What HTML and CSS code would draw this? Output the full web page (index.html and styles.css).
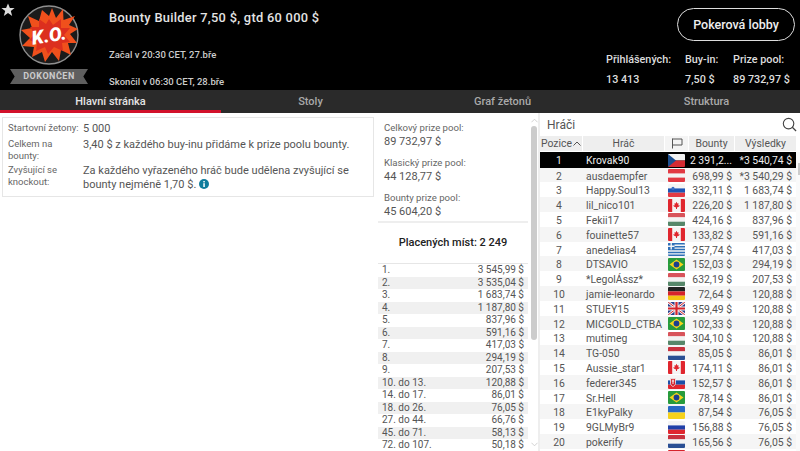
FILE: index.html
```html
<!DOCTYPE html>
<html lang="cs">
<head>
  <meta charset="UTF-8">
  <title>Bounty Builder</title>
  <link rel="stylesheet" href="styles.css">
</head>
<body>
  <svg class="defs" width="0" height="0">
    <symbol id="cz" viewBox="0 0 17 13"><rect width="17" height="6.5" fill="#f2f2f2"/><rect y="6.5" width="17" height="6.5" fill="#d52b32"/><path d="M0 0L8 6.5L0 13Z" fill="#1d4f8f"/></symbol>
    <symbol id="at" viewBox="0 0 17 13"><rect width="17" height="13" fill="#e23a44"/><rect y="4.4" width="17" height="4.2" fill="#f4f4f4"/></symbol>
    <symbol id="si" viewBox="0 0 17 13"><rect width="17" height="4.4" fill="#f4f4f4"/><rect y="4.4" width="17" height="4.3" fill="#1c55b5"/><rect y="8.7" width="17" height="4.3" fill="#e23a44"/><circle cx="5" cy="4.4" r="1.6" fill="#3a6fc4"/></symbol>
    <symbol id="ca" viewBox="0 0 17 13"><rect width="17" height="13" fill="#f4f4f4"/><rect width="4.2" height="13" fill="#e0262e"/><rect x="12.8" width="4.2" height="13" fill="#e0262e"/><path d="M8.5 2.8L9.4 4.6L10.6 4.2L10.2 6.6L11.6 6L11.2 7.6L9 8.4V10H8V8.4L5.8 7.6L5.4 6L6.8 6.6L6.4 4.2L7.6 4.6Z" fill="#e0262e"/></symbol>
    <symbol id="hu" viewBox="0 0 17 13"><rect width="17" height="4.4" fill="#d8535a"/><rect y="4.4" width="17" height="4.3" fill="#f2f2f2"/><rect y="8.7" width="17" height="4.3" fill="#57876a"/></symbol>
    <symbol id="gr" viewBox="0 0 17 13"><rect width="17" height="13" fill="#2f70b8"/><path d="M0 2.2H17M0 5.1H17M0 8H17M0 10.9H17" stroke="#f4f4f4" stroke-width="1.4"/><rect width="6.5" height="6.5" fill="#2f70b8"/><path d="M3.2 0V6.5M0 3.2H6.5" stroke="#f4f4f4" stroke-width="1.4"/></symbol>
    <symbol id="br" viewBox="0 0 17 13"><rect width="17" height="13" fill="#279b3c"/><path d="M8.5 1.4L15.5 6.5L8.5 11.6L1.5 6.5Z" fill="#f5d31a"/><circle cx="8.5" cy="6.5" r="2.9" fill="#1c3f8f"/></symbol>
    <symbol id="de" viewBox="0 0 17 13"><rect width="17" height="4.4" fill="#222"/><rect y="4.4" width="17" height="4.3" fill="#d6232b"/><rect y="8.7" width="17" height="4.3" fill="#f2c413"/></symbol>
    <symbol id="gb" viewBox="0 0 17 13"><rect width="17" height="13" fill="#2a3f8c"/><path d="M0 0L17 13M17 0L0 13" stroke="#f4f4f4" stroke-width="2.6"/><path d="M0 0L17 13M17 0L0 13" stroke="#d6232b" stroke-width="1"/><path d="M8.5 0V13M0 6.5H17" stroke="#f4f4f4" stroke-width="4"/><path d="M8.5 0V13M0 6.5H17" stroke="#d6232b" stroke-width="2.2"/></symbol>
    <symbol id="nl" viewBox="0 0 17 13"><rect width="17" height="4.4" fill="#c8323e"/><rect y="4.4" width="17" height="4.3" fill="#f4f4f4"/><rect y="8.7" width="17" height="4.3" fill="#2a4f94"/></symbol>
    <symbol id="sk" viewBox="0 0 17 13"><rect width="17" height="4.4" fill="#f4f4f4"/><rect y="4.4" width="17" height="4.3" fill="#1c4fa8"/><rect y="8.7" width="17" height="4.3" fill="#e0262e"/><path d="M2.5 2.6H7.5V7.5C7.5 9.4 5 10.6 5 10.6C5 10.6 2.5 9.4 2.5 7.5Z" fill="#d6232b" stroke="#f4f4f4" stroke-width=".8"/><path d="M5 3.6V8M3.8 5H6.2" stroke="#f4f4f4"/></symbol>
    <symbol id="ua" viewBox="0 0 17 13"><rect width="17" height="6.5" fill="#2a69c4"/><rect y="6.5" width="17" height="6.5" fill="#f6d21c"/></symbol>
    <symbol id="ru" viewBox="0 0 17 13"><rect width="17" height="4.4" fill="#f4f4f4"/><rect y="4.4" width="17" height="4.3" fill="#2040a8"/><rect y="8.7" width="17" height="4.3" fill="#e0262e"/></symbol>
    <symbol id="dk" viewBox="0 0 17 13"><rect width="17" height="13" fill="#d6232b"/></symbol>
  </svg>

  <!-- hlavička -->
  <header class="header">
    <svg class="fav-star" viewBox="0 0 14 14"><path d="M7 .5L8.9 5H13.6L9.8 8L11.2 13L7 10.1L2.8 13L4.2 8L.4 5H5.1Z" fill="#dcdcdc"/></svg>
    <div class="logo">
      <svg class="ko-badge" viewBox="0 0 60 60">
        <circle cx="30" cy="30" r="29" fill="#1b1b1b" stroke="#8f8f8f" stroke-width="1.4"/>
        <path d="M30 11L33 3L37 13L44 4L44.5 15L56 11L50 20L59 24L51 29L58 38L49 38L52 50L42 45L40 56L33 47L26 57L23 47L13 52L15 42L3 41L11 33L2 25L13 23L9 11L20 16L23 5Z" fill="#f0501c"/>
        <path d="M30 14L34 20L42 14L42 23L51 23L45 30L51 37L43 38L44 46L35 42L29 49L26 42L17 46L18 38L10 35L16 29L11 22L20 22L20 14L27 19Z" fill="#dc2f1e"/>
        <text class="ko-text" x="30" y="37" transform="rotate(-9 30 31)">K.O.</text>
      </svg>
      <div class="ribbon">DOKONČEN</div>
    </div>
    <div class="title-col">
      <h1 class="title">Bounty Builder 7,50 $, gtd 60 000 $</h1>
      <p class="time">Začal v 20:30 CET, 27.bře</p>
      <p class="time">Skončil v 06:30 CET, 28.bře</p>
    </div>
    <div class="right-col">
      <a href="#" class="lobby-btn">Pokerová lobby</a>
      <div class="stats">
        <div class="stat stat-players"><span>Přihlášených:</span><span>13 413</span></div>
        <div class="stat stat-buyin"><span>Buy-in:</span><span>7,50 $</span></div>
        <div class="stat"><span>Prize pool:</span><span>89 732,97 $</span></div>
      </div>
    </div>
  </header>

  <!-- záložky -->
  <nav class="tabs">
    <a href="#" class="tab active">Hlavní stránka</a>
    <a href="#" class="tab">Stoly</a>
    <a href="#" class="tab">Graf žetonů</a>
    <a href="#" class="tab tab-last">Struktura</a>
  </nav>

  <main class="content">
    <section class="info-col">
      <div class="info-box">
        <div class="info-label">Startovní žetony:</div>
        <div class="info-value">5 000</div>
        <div class="info-label">Celkem na bounty:</div>
        <div class="info-value">3,40 $ z každého buy-inu přidáme k prize poolu bounty.</div>
        <div class="info-label">Zvyšující se knockout:</div>
        <div class="info-value">Za každého vyřazeného hráč bude udělena zvyšující se bounty nejméně 1,70 $. <svg class="info-dot" viewBox="0 0 10 10"><circle cx="5" cy="5" r="5" fill="#0f7c9c"/><rect x="4.3" y="4.2" width="1.5" height="3.8" fill="#fff"/><rect x="4.3" y="2" width="1.5" height="1.4" fill="#fff"/></svg></div>
      </div>
    </section>

    <section class="prize-col">
      <div class="pools">
        <div class="pool"><div class="pool-label">Celkový prize pool:</div><div class="pool-value">89 732,97 $</div></div>
        <div class="pool"><div class="pool-label">Klasický prize pool:</div><div class="pool-value">44 128,77 $</div></div>
        <div class="pool"><div class="pool-label">Bounty prize pool:</div><div class="pool-value">45 604,20 $</div></div>
      </div>
      <div class="paid">Placených míst: 2 249</div>
      <div class="payouts">
        <div class="payout"><span>1.</span><span>3 545,99 $</span></div>
        <div class="payout"><span>2.</span><span>3 535,04 $</span></div>
        <div class="payout"><span>3.</span><span>1 683,74 $</span></div>
        <div class="payout"><span>4.</span><span>1 187,80 $</span></div>
        <div class="payout"><span>5.</span><span>837,96 $</span></div>
        <div class="payout"><span>6.</span><span>591,16 $</span></div>
        <div class="payout"><span>7.</span><span>417,03 $</span></div>
        <div class="payout"><span>8.</span><span>294,19 $</span></div>
        <div class="payout"><span>9.</span><span>207,53 $</span></div>
        <div class="payout"><span>10. do 13.</span><span>120,88 $</span></div>
        <div class="payout"><span>14. do 17.</span><span>86,01 $</span></div>
        <div class="payout"><span>18. do 26.</span><span>76,05 $</span></div>
        <div class="payout"><span>27. do 44.</span><span>66,76 $</span></div>
        <div class="payout"><span>45. do 71.</span><span>58,13 $</span></div>
        <div class="payout"><span>72. do 107.</span><span>50,18 $</span></div>
      </div>
    </section>

    <div class="scrollbar"><svg class="arrow" viewBox="0 0 8 5"><path d="M.5 4.5L4 1L7.5 4.5" fill="none" stroke="#ccc"/></svg><div class="thumb"></div><svg class="arrow arrow-down" viewBox="0 0 8 5"><path d="M.5 .5L4 4L7.5 .5" fill="none" stroke="#ccc"/></svg></div>

    <section class="players-col">
      <div class="players-head">
        <span>Hráči</span>
        <svg class="search" viewBox="0 0 16 16"><circle cx="7" cy="7" r="5.6" fill="none" stroke="#444" stroke-width="1.2"/><path d="M11 11L15 15" stroke="#444" stroke-width="1.4"/></svg>
      </div>
      <div class="row head">
        <div class="th">Pozice<svg class="sort" viewBox="0 0 8 5"><path d="M.5 4.5L4 1L7.5 4.5" fill="none" stroke="#555"/></svg></div>
        <div class="th">Hráč</div>
        <div class="th"><svg class="flag-icon" viewBox="0 0 12 11"><path d="M1.5 .5V10.5M1.5 1H11V7H1.5" fill="none" stroke="#555"/></svg></div>
        <div class="th">Bounty</div>
        <div class="th">Výsledky</div>
      </div>
      <div class="row me"><div class="pos">1</div><div>Krovak90</div><svg class="flag"><use href="#cz"/></svg><div class="num">2 391,2...</div><div class="num">*3 540,74 $</div></div>
      <div class="row"><div class="pos">2</div><div>ausdaempfer</div><svg class="flag"><use href="#at"/></svg><div class="num">698,99 $</div><div class="num">*3 540,29 $</div></div>
      <div class="row"><div class="pos">3</div><div>Happy.Soul13</div><svg class="flag"><use href="#si"/></svg><div class="num">332,11 $</div><div class="num">1 683,74 $</div></div>
      <div class="row"><div class="pos">4</div><div>lil_nico101</div><svg class="flag"><use href="#ca"/></svg><div class="num">226,20 $</div><div class="num">1 187,80 $</div></div>
      <div class="row"><div class="pos">5</div><div>Fekii17</div><svg class="flag"><use href="#hu"/></svg><div class="num">424,16 $</div><div class="num">837,96 $</div></div>
      <div class="row"><div class="pos">6</div><div>fouinette57</div><svg class="flag"><use href="#ca"/></svg><div class="num">133,82 $</div><div class="num">591,16 $</div></div>
      <div class="row"><div class="pos">7</div><div>anedelias4</div><svg class="flag"><use href="#gr"/></svg><div class="num">257,74 $</div><div class="num">417,03 $</div></div>
      <div class="row"><div class="pos">8</div><div>DTSAVIO</div><svg class="flag"><use href="#br"/></svg><div class="num">152,03 $</div><div class="num">294,19 $</div></div>
      <div class="row"><div class="pos">9</div><div>*LegolÁssz*</div><svg class="flag"><use href="#hu"/></svg><div class="num">632,19 $</div><div class="num">207,53 $</div></div>
      <div class="row"><div class="pos">10</div><div>jamie-leonardo</div><svg class="flag"><use href="#de"/></svg><div class="num">72,64 $</div><div class="num">120,88 $</div></div>
      <div class="row"><div class="pos">11</div><div>STUEY15</div><svg class="flag"><use href="#gb"/></svg><div class="num">359,49 $</div><div class="num">120,88 $</div></div>
      <div class="row"><div class="pos">12</div><div>MICGOLD_CTBA</div><svg class="flag"><use href="#br"/></svg><div class="num">102,33 $</div><div class="num">120,88 $</div></div>
      <div class="row"><div class="pos">13</div><div>mutimeg</div><svg class="flag"><use href="#hu"/></svg><div class="num">304,10 $</div><div class="num">120,88 $</div></div>
      <div class="row"><div class="pos">14</div><div>TG-050</div><svg class="flag"><use href="#nl"/></svg><div class="num">85,05 $</div><div class="num">86,01 $</div></div>
      <div class="row"><div class="pos">15</div><div>Aussie_star1</div><svg class="flag"><use href="#ca"/></svg><div class="num">174,11 $</div><div class="num">86,01 $</div></div>
      <div class="row"><div class="pos">16</div><div>federer345</div><svg class="flag"><use href="#sk"/></svg><div class="num">152,57 $</div><div class="num">86,01 $</div></div>
      <div class="row"><div class="pos">17</div><div>Sr.Hell</div><svg class="flag"><use href="#br"/></svg><div class="num">78,14 $</div><div class="num">86,01 $</div></div>
      <div class="row"><div class="pos">18</div><div>E1kyPalky</div><svg class="flag"><use href="#ua"/></svg><div class="num">87,54 $</div><div class="num">76,05 $</div></div>
      <div class="row"><div class="pos">19</div><div>9GLMyBr9</div><svg class="flag"><use href="#ru"/></svg><div class="num">156,88 $</div><div class="num">76,05 $</div></div>
      <div class="row"><div class="pos">20</div><div>pokerify</div><svg class="flag"><use href="#nl"/></svg><div class="num">165,56 $</div><div class="num">76,05 $</div></div>
      <div class="row"><div class="pos"></div><div></div><svg class="flag"><use href="#dk"/></svg><div></div><div></div></div>
      <div class="players-scroll"><div class="players-thumb"></div></div>
    </section>
  </main>
</body>
</html>
```

FILE: styles.css
```css
body {
  margin: 0;
  height: 451px;
  overflow: hidden;
  background-color: #fff;
  font-family: Roboto, "Liberation Sans", sans-serif;
  color: #555;
}

.defs {
  position: absolute;
}

/* hlavička */
.header {
  position: relative;
  display: flex;
  height: 90px;
  background-color: #000;
  color: #ddd;
}

.fav-star {
  position: absolute;
  top: 3px;
  left: 1px;
  width: 14px;
  height: 14px;
}

.logo {
  display: flex;
  flex-direction: column;
  align-items: center;
  width: 98px;
  margin-right: 11px;
  padding-top: 5px;
}

.ko-badge {
  width: 60px;
  height: 60px;
}

.ko-text {
  font-family: Roboto, sans-serif;
  font-weight: 900;
  font-style: italic;
  font-size: 19px;
  fill: #fff;
  text-anchor: middle;
}

.ribbon {
  width: 78px;
  height: 15px;
  margin-top: 4px;
  background-color: #5f5f5f;
  clip-path: polygon(0 0, 100% 0, 94% 50%, 100% 100%, 0 100%, 6% 50%);
  color: #ccc;
  font-size: 9px;
  font-weight: 700;
  line-height: 15px;
  letter-spacing: .5px;
  text-align: center;
}

.title-col {
  flex-grow: 1;
}

.title {
  margin: 10px 0 0;
  font-size: 12.8px;
  font-weight: 500;
  line-height: 16px;
  letter-spacing: .3px;
  color: #e4e4e4;
}

.time {
  margin: 0;
  font-size: 9.5px;
  font-weight: 500;
  line-height: 13px;
  color: #ccc;
}

.title + .time {
  margin-top: 22px;
}

.time + .time {
  margin-top: 14px;
}

.right-col {
  display: flex;
  flex-direction: column;
  align-items: flex-end;
  width: 194px;
  padding-right: 5px;
  padding-top: 8px;
}

.lobby-btn {
  width: 116px;
  height: 31px;
  border: 1px solid #ddd;
  border-radius: 17px;
  color: #eee;
  font-size: 12.5px;
  font-weight: 500;
  line-height: 31px;
  text-align: center;
  text-decoration: none;
}

.stats {
  display: flex;
  align-self: stretch;
  margin-top: 12px;
  padding-left: 5px;
  font-size: 10.8px;
  font-weight: 500;
}

.stat {
  display: flex;
  flex-direction: column;
  gap: 7px;
  white-space: nowrap;
}

.stat span {
  line-height: 13px;
}

.stat-players {
  width: 79px;
}

.stat-buyin {
  width: 48px;
}

/* záložky */
.tabs {
  display: grid;
  grid-template-columns: 221px 179px 205px 1fr;
  height: 23px;
  background-color: #2a2a2a;
}

.tab {
  color: #a9a9a9;
  font-size: 11px;
  font-weight: 500;
  line-height: 24px;
  text-align: center;
  text-decoration: none;
}

.tab-last {
  padding-left: 8px;
}

.tab.active {
  border-bottom: 3px solid #d2112b;
  height: 20px;
  color: #e4e4e4;
}

/* obsah */
.content {
  display: flex;
  height: 338px;
}

.info-col {
  width: 378px;
  padding: 4px 2px;
  box-sizing: border-box;
}

.info-box {
  display: grid;
  grid-template-columns: 75px 1fr;
  row-gap: 2px;
  width: 372px;
  height: 80px;
  padding: 4px 5px;
  box-sizing: border-box;
  border: 1px solid #e6e6e6;
}

.info-label {
  font-size: 9.5px;
  line-height: 12px;
  color: #666;
}

.info-value {
  font-size: 11px;
  line-height: 14px;
  color: #555;
}

.info-dot {
  width: 10px;
  height: 10px;
  vertical-align: -1px;
}

.prize-col {
  display: flex;
  flex-direction: column;
  width: 150px;
}

.pools {
  height: 110px;
  padding: 8px 6px 0;
  box-sizing: border-box;
  border-bottom: 2px solid #eee;
}

.pool {
  height: 35px;
}

.pool-label {
  font-size: 9.6px;
  line-height: 13px;
  color: #666;
}

.pool-value {
  font-size: 11px;
  line-height: 15px;
}

.paid {
  height: 40px;
  border-bottom: 1px solid #e6e6e6;
  color: #222;
  font-size: 11px;
  font-weight: 500;
  line-height: 40px;
  text-align: center;
}

.payout {
  display: flex;
  justify-content: space-between;
  height: 12.5px;
  padding: 0 4px;
  font-size: 10px;
  line-height: 12.5px;
}

.payout:nth-child(even) {
  background-color: #f0f0f0;
}

.scrollbar {
  position: relative;
  width: 7px;
  margin-left: 3px;
}

.arrow {
  position: absolute;
  top: 5px;
  left: 0;
  width: 7px;
  height: 5px;
}

.arrow-down {
  top: auto;
  bottom: 4px;
}

.thumb {
  position: absolute;
  top: 13px;
  left: 0;
  width: 6px;
  height: 214px;
  border-radius: 3px;
  background-color: #ccc;
}

.players-col {
  position: relative;
  flex-grow: 1;
  overflow: hidden;
  box-sizing: border-box;
  border-left: 2px solid #eee;
}

.players-head {
  display: flex;
  justify-content: space-between;
  align-items: center;
  height: 23px;
  padding: 0 3px 0 7px;
  font-size: 12px;
}

.search {
  width: 15px;
  height: 15px;
}

.row {
  display: grid;
  grid-template-columns: 46px 82px 17px 1fr 60px;
  align-items: center;
  width: 256px;
  height: 14.8px;
  padding-right: 4px;
  box-sizing: border-box;
  font-size: 10.4px;
  line-height: 14px;
}

/* el texto queda 1px mas abajo que la bandera */
.row > div {
  padding-top: 2px;
}

.row:nth-child(even) {
  background-color: #f5f5f5;
}

.row.me {
  height: 15.6px;
  background-color: #000;
  color: #eee;
}

.row.head {
  display: flex;
  gap: 1px;
  height: 15px;
  margin-bottom: 1px;
  padding-right: 0;
  background-color: #fff;
  color: #555;
}

.row > .th {
  display: flex;
  justify-content: center;
  align-items: center;
  gap: 1px;
  height: 15px;
  padding-top: 0;
  background-color: #eee;
  font-size: 10.4px;
}

.row > .th:nth-child(1) { width: 42px; }
.row > .th:nth-child(2) { width: 81px; }
.row > .th:nth-child(3) { width: 23px; background-color: #f4f4f4; }
.row > .th:nth-child(4) { width: 45px; }
.row > .th:nth-child(5) { width: 61px; }

.sort {
  width: 8px;
  height: 5px;
}

.flag-icon {
  width: 12px;
  height: 11px;
}

.pos {
  padding-right: 8px;
  text-align: center;
}

.num {
  text-align: right;
  white-space: nowrap;
}

.flag {
  width: 17px;
  height: 13px;
  border-radius: 1px;
}

.players-scroll {
  position: absolute;
  top: 39px;
  right: 0;
  width: 4px;
  height: 299px;
  background-color: #fafafa;
}

.players-thumb {
  width: 2px;
  height: 12px;
  margin: 11px 0 0 2px;
  background-color: #ccc;
}
```
